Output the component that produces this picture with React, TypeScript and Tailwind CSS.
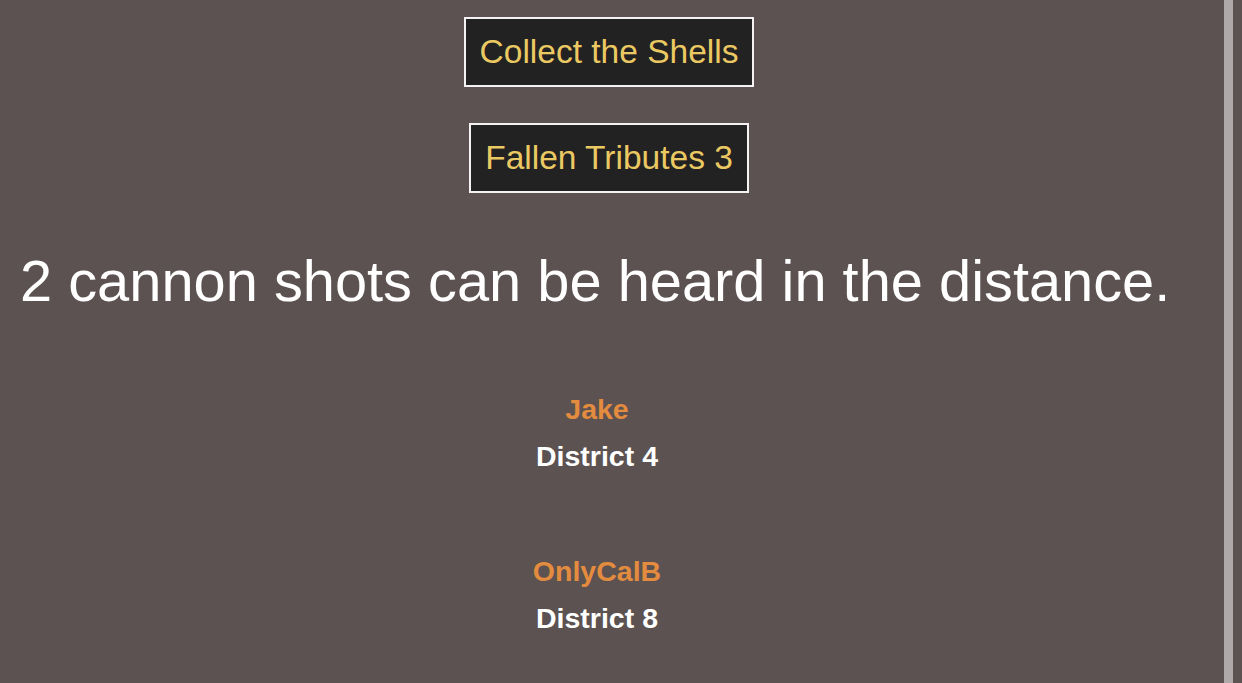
import React from "react";

type Fallen = { name: string; district: number };

const fallen: Fallen[] = [
  { name: "Jake", district: 4 },
  { name: "OnlyCalB", district: 8 },
];

function ArenaButton(props: { label: string }) {
  return (
    <div className="border-2 border-[#f4f2f2] bg-[#232222] p-[14px] text-[33.5px] leading-[38px] text-[#ebc962]">
      {props.label}
    </div>
  );
}

export default function App() {
  return (
    <div
      className="flex h-screen w-full overflow-hidden bg-[#5b5251]"
      style={{ fontFamily: '"Liberation Sans", Arial, sans-serif' }}
    >
      <div className="flex flex-1 flex-col">
        <div className="flex flex-col items-center gap-[36px] pt-[17px] pr-[6px]">
          <ArenaButton label="Collect the Shells" />
          <ArenaButton label="Fallen Tributes 3" />
        </div>

        <h1 className="mt-[55px] pl-[20px] text-[57.8px] leading-[66px] text-white">
          2 cannon shots can be heard in the distance.
        </h1>

        <div className="mt-[79px] flex flex-col items-center gap-[83px] pr-[30px]">
          {fallen.map((t) => (
            <div key={t.name} className="flex flex-col items-center gap-[15px] text-[28.5px] font-bold leading-[32px]">
              <span className="text-[#e38b3e]">{t.name}</span>
              <span className="text-white">District {t.district}</span>
            </div>
          ))}
        </div>
      </div>
      <div className="w-[9px] bg-[#b0a9a9]" />
      <div className="w-[9px]" />
    </div>
  );
}
